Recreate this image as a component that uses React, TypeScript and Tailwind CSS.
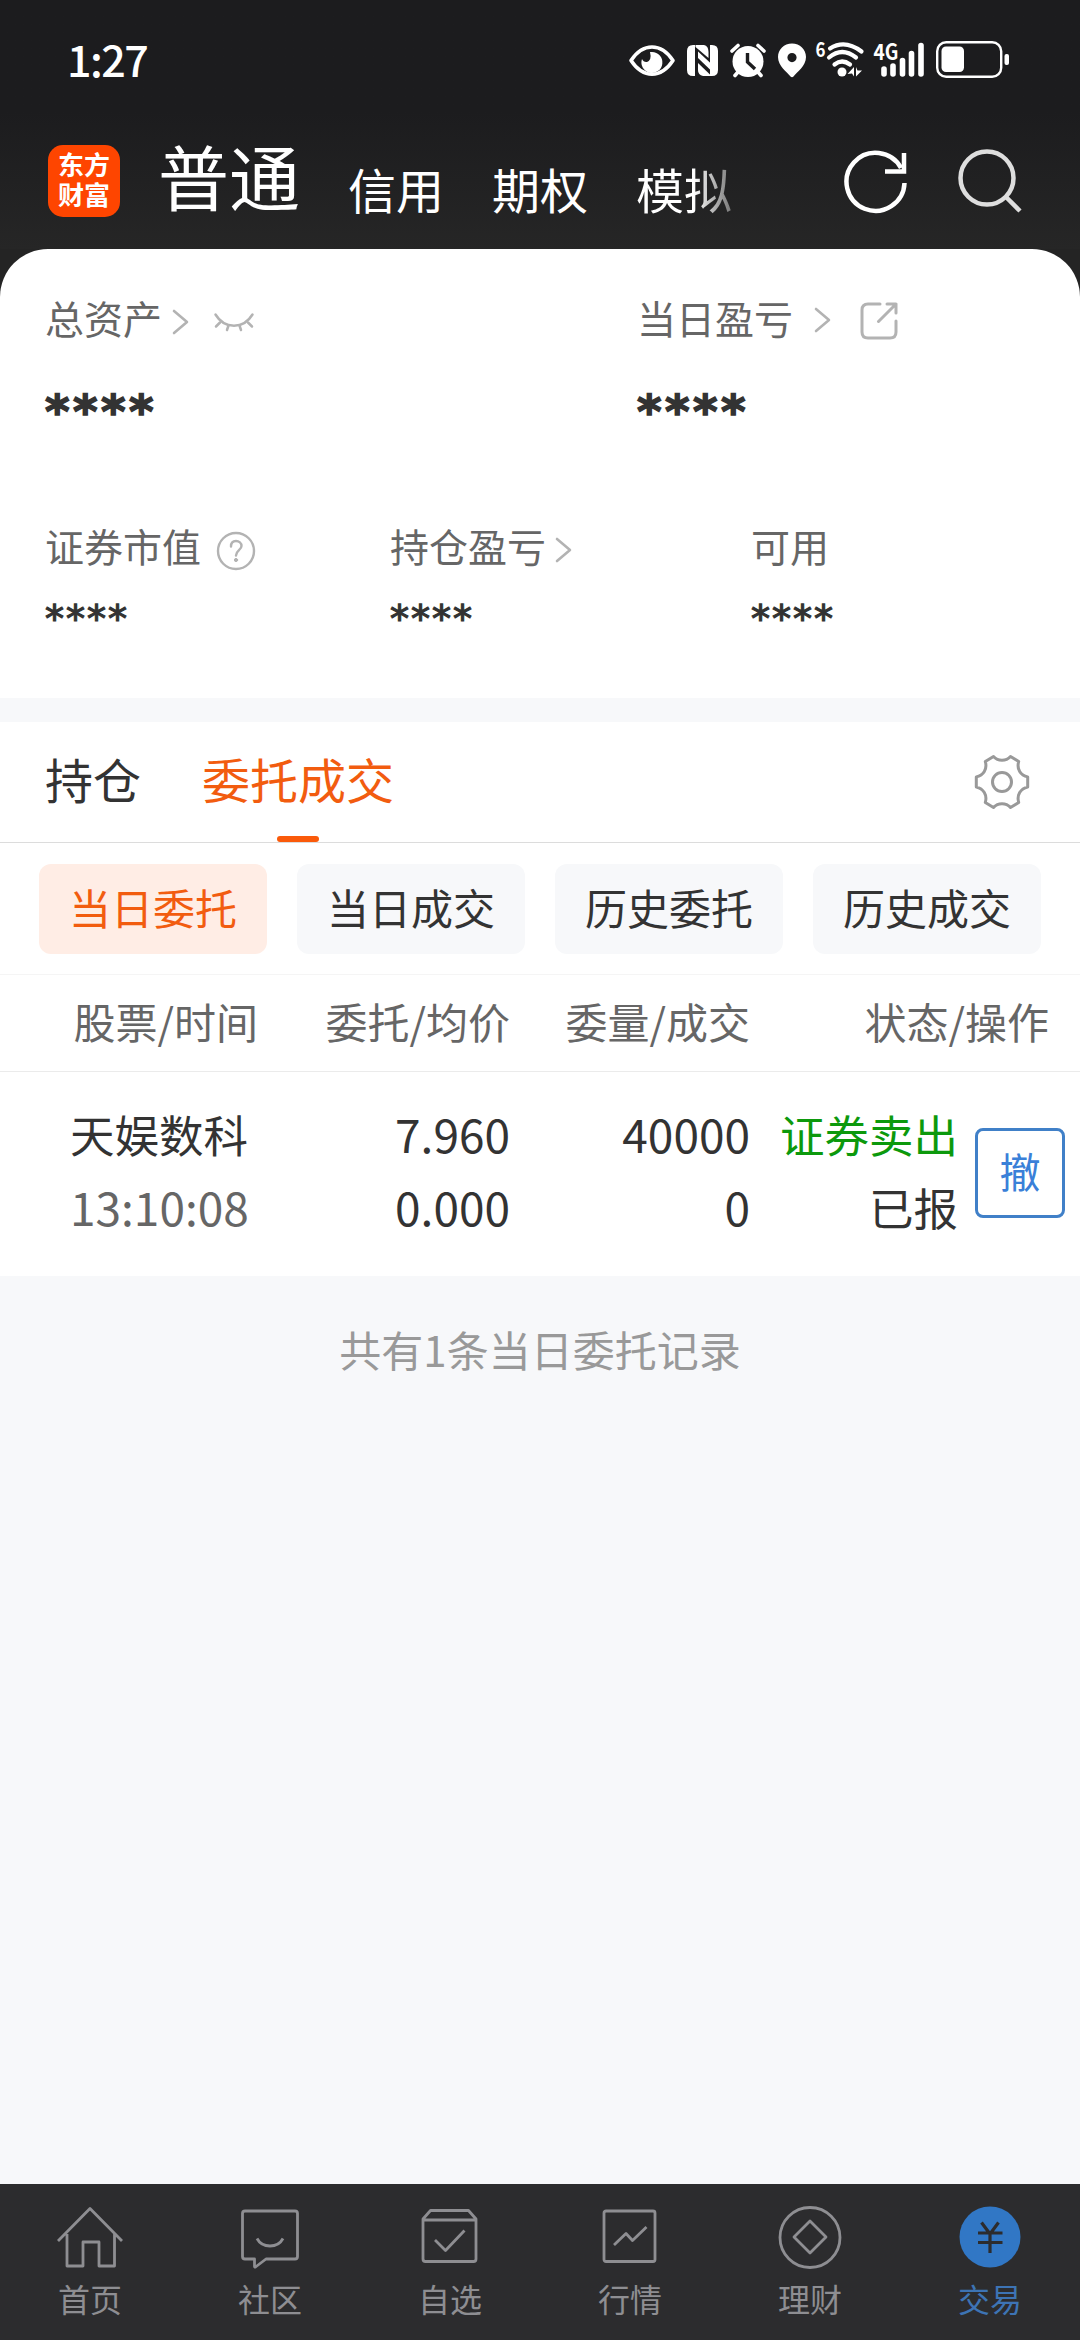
import { useState } from "react";
import type { ReactNode } from "react";

type IconProps = { className?: string };

interface OrderProps {
  _id: string;
  name: string;
  time: string;
  price: string;
  avgPrice: string;
  amount: string;
  filled: string;
  side: string;
  status: string;
}

const accounts = ["信用", "期权"];
const filters = ["当日委托", "当日成交", "历史委托", "历史成交"];

const orders: OrderProps[] = [
  {
    _id: "1",
    name: "天娱数科",
    time: "13:10:08",
    price: "7.960",
    avgPrice: "0.000",
    amount: "40000",
    filled: "0",
    side: "证券卖出",
    status: "已报",
  },
];

function Chevron({ className = "" }: IconProps) {
  return (
    <svg className={className} width="17" height="26" viewBox="0 0 17 26" fill="none" stroke="#b3b3b3" strokeWidth="2.6" strokeLinecap="round" strokeLinejoin="round">
      <path d="M2 2 15 13 2 24" />
    </svg>
  );
}

function ClosedEye({ className = "" }: IconProps) {
  return (
    <svg className={className} width="42" height="20" viewBox="0 0 42 20" fill="none" stroke="#b3b3b3" strokeWidth="2.5" strokeLinecap="round">
      <path d="M2.500 2.500C7 10 13.500 13.700 21 13.700S35 10 39.500 2.500" />
      <path d="M7 10.500 3 14.500M15.500 13.500 14 18M26.500 13.500 28 18M35 10.500 39 14.500" />
    </svg>
  );
}

function Export({ className = "" }: IconProps) {
  return (
    <svg className={className} width="38" height="38" viewBox="0 0 38 38" fill="none" stroke="#b3b3b3" strokeWidth="3" strokeLinecap="round" strokeLinejoin="round">
      <path d="M20 2H8Q2 2 2 8V30Q2 36 8 36H30Q36 36 36 30V19" />
      <path d="M27 2H36V11M36 2 18.500 19.500" />
    </svg>
  );
}

function Question({ className = "" }: IconProps) {
  return (
    <svg className={className} width="40" height="40" viewBox="0 0 40 40" fill="none" stroke="#b3b3b3" strokeWidth="2.4" strokeLinecap="round">
      <circle cx="20" cy="20" r="18" />
      <path d="M15 15.500C15 12 17 10 20 10S25.500 12 25.500 15C25.500 19 20 19.500 20 24.500" />
      <circle cx="20" cy="29" r="1.6" fill="#b3b3b3" strokeWidth="1" />
    </svg>
  );
}

function Gear() {
  return (
    <svg width="56" height="56" viewBox="0 0 56 56" fill="none" stroke="#999" strokeWidth="3" strokeLinejoin="round">
      <path d="M19.500 2.500C24 7.500 32 7.500 36.500 2.500L44.700 7.500C42.500 15 46.500 21.500 53.700 22.900V33.100C46.500 34.500 42.500 41 44.700 48.500L36.500 53.500C32 48.500 24 48.500 19.500 53.500L11.300 48.500C13.500 41 9.500 34.500 2.300 33.100V22.900C9.500 21.500 13.500 15 11.300 7.500Z" />
      <circle cx="28" cy="28" r="9.500" />
    </svg>
  );
}

function StatusBar() {
  return (
    <div className="flex h-[120px] items-center justify-between pl-[67px] pr-[70px]">
      <span className="pb-[4px] text-[43px] font-medium leading-none tracking-[-1.5px]">1:27</span>
      <div className="flex items-center">
        <svg width="48" height="40" viewBox="628 40 48 40" fill="none" stroke="#fff" strokeWidth="3.600">
          <path d="M631 60.500C637 51.500 644 47 652 47S667 51.500 673 60.500C667 69.500 660 74.200 652 74.200S637 69.500 631 60.500Z" strokeLinejoin="round" />
          <path d="M652 52A10.500 10.500 0 1 1 642 59Q643.500 62.500 647 62Q652 60 650 52Z" fill="#fff" stroke="none" />
        </svg>
        <svg className="ml-[11px]" width="31" height="40" viewBox="687 40 31 40" fill="#fff">
          <path d="M693 45H695V76H693Q687 76 687 70V51Q687 45 693 45Z" />
          <path d="M710 45H712Q718 45 718 51V70Q718 76 712 76H710Z" />
          <path d="M695.500 45H704Q708.500 46 708.500 52V58L695.500 47Z" />
          <path d="M698 51.500 711.500 64V71L698 58Z" />
          <path d="M698 63 711.500 76H703Q698 75 698 70Z" />
        </svg>
        <svg className="ml-[11px]" width="38" height="40" viewBox="729 40 38 40">
          <circle cx="748" cy="61.500" r="15.500" fill="#fff" />
          <path d="M732 51 738 45.500M764 51 758 45.500M738 72 735 75.500M758 72 761 75.500" stroke="#fff" strokeWidth="3.600" strokeLinecap="round" />
          <path d="M747.500 53V62L755 69" fill="none" stroke="#1c1c1e" strokeWidth="3.400" />
        </svg>
        <svg className="ml-[11px]" width="28" height="40" viewBox="778 40 28 40">
          <path d="M792 43.500C800 43.500 806 49.500 806 57C806 66 797 72 793.500 76.500Q792 78 790.500 76.500C787 72 778 66 778 57C778 49.500 784 43.500 792 43.500ZM792 53A4.600 4.600 0 1 0 792 62.200A4.600 4.600 0 1 0 792 53Z" fill="#fff" />
        </svg>
        <svg className="ml-[9px]" width="50" height="60" viewBox="815 30 50 60" fill="none" stroke="#fff" strokeWidth="4.200" strokeLinecap="round">
          <text x="815.500" y="57" fontSize="20" fontWeight="700" fill="#fff" stroke="none" textLength="10" lengthAdjust="spacingAndGlyphs">
            6
          </text>
          <path d="M830 48.500Q845 39 861.500 51.500" />
          <path d="M829 57.500Q842 46.500 856 57.500" />
          <path d="M834.500 64.500Q842 58.500 850 64.500" />
          <circle cx="842" cy="72" r="4.500" fill="#fff" stroke="none" />
          <path d="M847.500 74 854 67V76.500L852 73.500ZM856 67 857.500 70.500 862 70.500 856 76.500Z" fill="#fff" stroke="none" />
        </svg>
        <svg className="ml-[8px]" width="52" height="60" viewBox="873 30 52 60" stroke="#fff" strokeWidth="5.600" strokeLinecap="round">
          <text x="873.500" y="59.500" fontSize="22" fontWeight="700" fill="#fff" stroke="none" textLength="25" lengthAdjust="spacingAndGlyphs">
            4G
          </text>
          <path d="M884 69V74M893 66V74M902.500 60.500V74M911.500 53.500V74M921 45.500V74" />
        </svg>
        <svg className="ml-[11px]" width="74" height="40" viewBox="936 40 74 40">
          <rect x="937.200" y="42.200" width="64" height="34.600" rx="9" fill="none" stroke="#fff" strokeWidth="2.400" />
          <rect x="941.500" y="46.500" width="22.500" height="25.500" rx="4.500" fill="#fff" />
          <rect x="1004.500" y="54" width="4.500" height="11" rx="2" fill="#fff" />
        </svg>
      </div>
    </div>
  );
}

function TopBar() {
  return (
    <div className="flex h-[129px] items-start pl-12 leading-none">
      <p className="mt-[25px] h-[72px] w-[72px] rounded-[15px] bg-[#fe4500] px-[10px] pt-[4px] text-[26px] font-bold leading-[30px]">东方财富</p>
      <span className="ml-[38px] mt-[19px] text-[71px]">普通</span>
      <div className="ml-12 mt-[44px] flex gap-12 text-[48px]">
        {accounts.map((account) => (
          <span key={account}>{account}</span>
        ))}
        <span className="bg-linear-to-r from-white from-60% to-[#777] bg-clip-text pb-2 text-transparent">模拟</span>
      </div>
      <svg className="ml-[111px] mt-[29px]" width="66" height="66" viewBox="843 149 66 66" fill="none" stroke="#fff" strokeWidth="4.500">
        <path d="M904.500 183A29 29 0 1 1 901 168M904 153V171.500H885" />
      </svg>
      <svg className="ml-[47px] mt-[27px]" width="66" height="66" viewBox="956 147 66 66" fill="none" stroke="#dedede" strokeWidth="4.500">
        <circle cx="987" cy="178" r="26.500" />
        <path d="M1006 197 1020 211" />
      </svg>
    </div>
  );
}

function Label({ children }: { children: ReactNode }) {
  return <div className="flex h-[39px] items-center whitespace-nowrap text-[39px] leading-none text-[#666]">{children}</div>;
}

function BigStars() {
  return <p className="mt-[48px] h-[53px] font-['DejaVu_Sans'] text-[47px] font-bold leading-[53px] tracking-[3.4px] text-[#333] [-webkit-text-stroke:1.5px_#333]">****</p>;
}

function SmallStars() {
  return <p className="mt-[33px] font-['DejaVu_Sans'] text-[38px] leading-[42px] tracking-[2px] text-[#333] [-webkit-text-stroke:1.2px_#333]">****</p>;
}

function AccountSummary() {
  return (
    <section className="h-[449px] rounded-t-[48px] bg-white pl-[45px] pt-[49px]">
      <div className="flex">
        <div className="w-[592px]">
          <Label>
            总资产
            <Chevron className="ml-[10px] mt-[8px]" />
            <ClosedEye className="ml-[24px] mt-[9px]" />
          </Label>
          <BigStars />
        </div>
        <div>
          <Label>
            当日盈亏
            <Chevron className="ml-[21px] mt-[5px]" />
            <Export className="ml-[29px] mt-[6px]" />
          </Label>
          <BigStars />
        </div>
      </div>
      <div className="mt-[88px] flex">
        <div className="w-[345px]">
          <Label>
            证券市值
            <Question className="ml-[15px] mt-[10px]" />
          </Label>
          <SmallStars />
        </div>
        <div className="w-[361px]">
          <Label>
            持仓盈亏
            <Chevron className="ml-[9px] mt-[9px]" />
          </Label>
          <SmallStars />
        </div>
        <div>
          <Label>可用</Label>
          <SmallStars />
        </div>
      </div>
    </section>
  );
}

function OrderTable() {
  return (
    <>
      <div className="flex h-[98px] items-center border-y border-t-[#f5f5f5] border-b-[#ebebeb] pb-[5px] text-right text-[42px] leading-none text-[#666]">
        <span className="w-[258px]">股票/时间</span>
        <span className="w-[252px]">委托/均价</span>
        <span className="w-[240px]">委量/成交</span>
        <span className="w-[299px]">状态/操作</span>
      </div>
      {orders.map((order) => (
        <div key={order._id} className="flex h-[204px] items-start pt-[25px] text-right text-[46px] leading-[73px] text-[#333]">
          <div className="w-[258px] pl-[70px] text-left">
            <p className="text-[44.500px]">{order.name}</p>
            <p className="text-[#666]">{order.time}</p>
          </div>
          <div className="w-[252px]">
            <p>{order.price}</p>
            <p>{order.avgPrice}</p>
          </div>
          <div className="w-[240px]">
            <p>{order.amount}</p>
            <p>{order.filled}</p>
          </div>
          <div className="w-[208px] text-[44.500px]">
            <p className="text-[#0c990c]">{order.side}</p>
            <p>{order.status}</p>
          </div>
          <button className="ml-[17px] mt-[31px] size-[90px] rounded-[8px] border-3 border-[#4080c8] pb-[5px] text-[41px] leading-none text-[#3a80d8]">
            撤
          </button>
        </div>
      ))}
    </>
  );
}

function HomeIcon() {
  return (
    <path d="M1 35 33 2.500 65 35M10 28V60H26V36H42V60H57.500V28" />
  );
}

const navItems: { name: string; icon: ReactNode }[] = [
  { name: "首页", icon: <HomeIcon /> },
  {
    name: "社区",
    icon: (
      <>
        <path d="M8 5H58Q60.500 5 60.500 7.500V50.500Q60.500 53 58 53H29L18.500 61Q17.500 61.500 17.500 60V53H8Q5.500 53 5.500 50.500V7.500Q5.500 5 8 5Z" />
        <path d="M20 32.500Q24 40 33 40T46 32.500" />
      </>
    ),
  },
  {
    name: "自选",
    icon: (
      <>
        <path d="M6 13 13.500 4.500H51.500L59 13V53Q59 55.500 56.500 55.500H8.500Q6 55.500 6 53ZM6 14H59" />
        <path d="M18 34 28.500 44.500 47.500 24.500" />
      </>
    ),
  },
  {
    name: "行情",
    icon: (
      <>
        <rect x="7" y="5" width="51" height="50.500" rx="2" />
        <path d="M17 39 29 27.500 35.500 34.500 49.500 21" />
      </>
    ),
  },
  {
    name: "理财",
    icon: (
      <>
        <circle cx="33" cy="31.500" r="30" />
        <path d="M33 15 49 31 33 47 17 31Z" />
      </>
    ),
  },
  {
    name: "交易",
    icon: (
      <>
        <circle cx="33" cy="31" r="30.500" fill="#3177c5" stroke="none" />
        <path d="M24.500 16.500 33 28 41.500 16.500M33 28V47M21 27H45.500M21 36.500H45.500" stroke="#2c2c2e" strokeWidth="3.200" />
      </>
    ),
  },
];

function BottomNav() {
  return (
    <nav className="grid h-[156px] grid-cols-6 bg-[#2c2c2e] pt-[22px]">
      {navItems.map(({ name, icon }) => (
        <div key={name} className={name === "交易" ? "flex flex-col items-center text-[#3d74b5]" : "flex flex-col items-center text-[#8e8e92]"}>
          <svg width="66" height="64" viewBox="0 0 66 64" fill="none" stroke="currentColor" strokeWidth="2.800" strokeLinejoin="round">
            {icon}
          </svg>
          <span className="mt-[12px] text-[32px] leading-none">{name}</span>
        </div>
      ))}
    </nav>
  );
}

function App() {
  const [filter, setFilter] = useState(filters[0]);

  return (
    <main className="flex h-[2340px] w-[1080px] flex-col overflow-hidden bg-[#f7f8fa] font-['Noto_Sans_CJK_SC',sans-serif]">
      <div className="bg-[#242424]">
        <header className="h-[249px] bg-linear-to-b from-[#1c1c1e] from-45% to-[#262626] text-white">
          <StatusBar />
          <TopBar />
        </header>
        <AccountSummary />
      </div>
      <section className="mt-6 bg-white">
        <div className="flex h-[121px] items-start border-b border-[#dcdcdc] pl-[45px] pr-[50px] text-[48px] leading-none text-[#333]">
          <span className="mt-[32px]">持仓</span>
          <div className="ml-[61px] mt-[32px] flex flex-col items-center text-[#f25c0f]">
            委托成交
            <span className="mt-[34px] h-[6px] w-[42px] rounded-full bg-[#fa5a0a]" />
          </div>
          <div className="ml-auto mt-[32px]">
            <Gear />
          </div>
        </div>
        <div className="flex h-[131px] gap-[30px] px-[39px] pt-[21px]">
          {filters.map((item) => (
            <button
              key={item}
              onClick={() => setFilter(item)}
              className={
                item === filter
                  ? "h-[90px] w-[228px] rounded-xl bg-[#ffede5] pb-[4px] text-[42px] leading-none text-[#f25c0f]"
                  : "h-[90px] w-[228px] rounded-xl bg-[#f7f8fa] pb-[4px] text-[42px] leading-none text-[#333]"
              }
            >
              {item}
            </button>
          ))}
        </div>
        <OrderTable />
      </section>
      <p className="mt-[52px] grow text-center text-[42px] leading-none text-[#999]">共有1条当日委托记录</p>
      <BottomNav />
    </main>
  );
}

export default App;
